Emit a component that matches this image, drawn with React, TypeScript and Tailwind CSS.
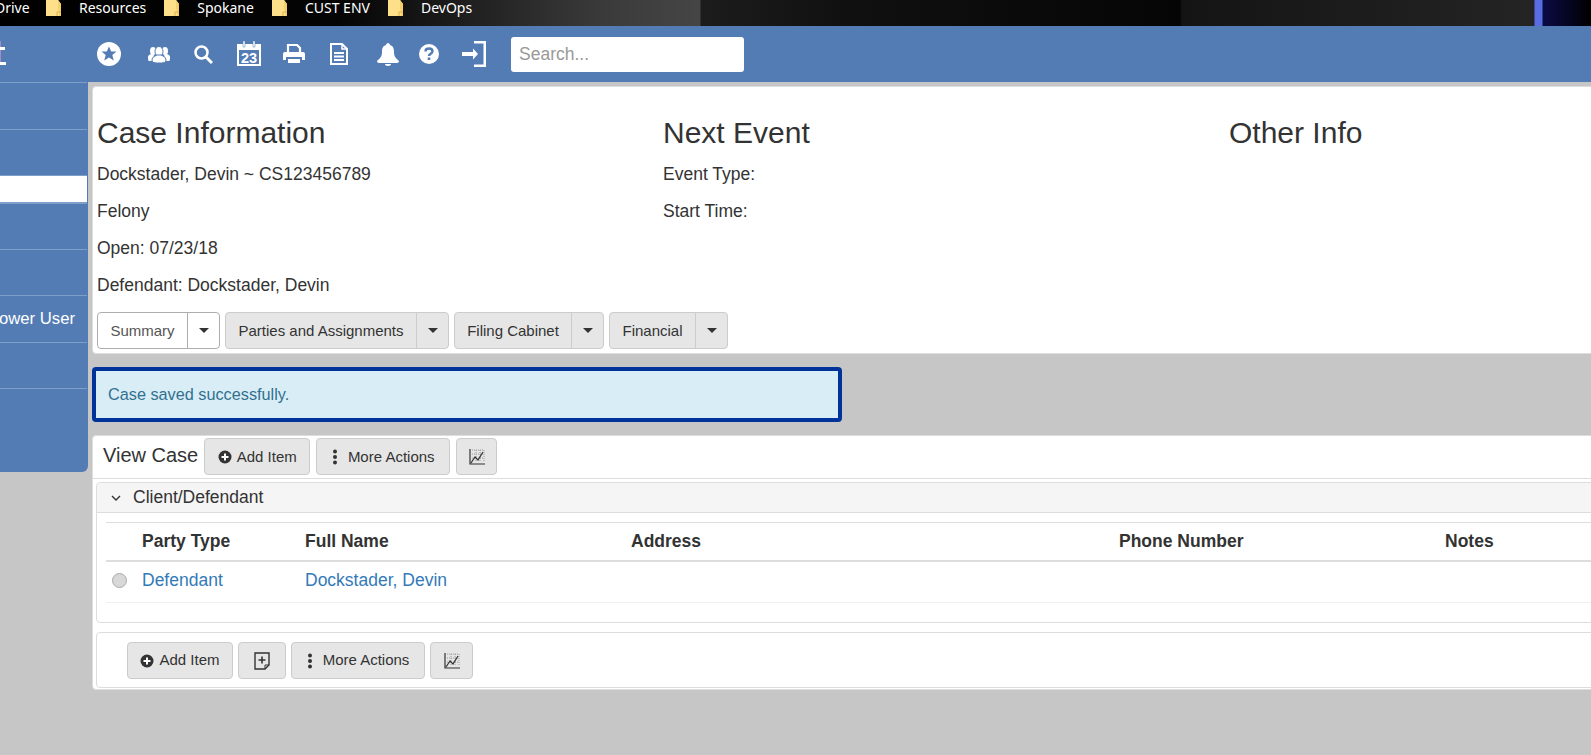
const bookmarks = ["Resources", "Spokane", "CUST ENV", "DevOps"];

const Folder = () => (
  <svg width="15" height="16" viewBox="0 0 15 16" className="shrink-0">
    <path d="M0 0H12L15 4V16H0Z" fill="#ffe08a" />
    <path d="M12 0L15 4V16H13V11L12 9Z" fill="#f5d06a" />
    <path d="M11 16V12H15" fill="none" stroke="#d9b24c" />
  </svg>
);

const StarIcon = () => (
  <svg width="24" height="24" viewBox="0 0 24 24">
    <circle cx="12" cy="12" r="12" fill="#fff" />
    <path d="M12 4.500l2.200 5h5.300l-4.200 3.500 1.500 5.500-4.800-3-4.800 3 1.500-5.500-4.200-3.500h5.300z" fill="#537cb5" />
  </svg>
);

const UsersIcon = () => (
  <svg width="22" height="17" viewBox="0 0 22 17" fill="#fff">
    <ellipse cx="5" cy="5" rx="3" ry="4" />
    <ellipse cx="17" cy="5" rx="3" ry="4" />
    <path d="M0 11c0-2 2-2.500 3-3l3 1-2 6H1c-1 0-1-2-1-4zM22 11c0-2-2-2.500-3-3l-3 1 2 6h3c1 0 1-2 1-4z" />
    <ellipse cx="11" cy="5.500" rx="4" ry="5" stroke="#537cb5" />
    <path d="M4 14c0-3 3-4 5-5h4c2 1 5 2 5 5 0 3-3 3-7 3s-7 0-7-3z" stroke="#537cb5" />
  </svg>
);

const SearchIcon = () => (
  <svg width="19" height="19" viewBox="0 0 19 19" fill="none" stroke="#fff">
    <circle cx="7.500" cy="7.500" r="6" strokeWidth="2.500" />
    <path d="M12 12l6 6" strokeWidth="3" />
  </svg>
);

const CalendarIcon = () => (
  <svg width="24" height="25" viewBox="0 0 24 25">
    <path d="M1 4h22v20H1z" fill="none" stroke="#fff" strokeWidth="2" />
    <path d="M1 4h22v5H1z" fill="#fff" />
    <path d="M6 0h2v6H6zM16 0h2v6h-2z" fill="#fff" stroke="#537cb5" strokeWidth="0.500" />
    <text x="12" y="22" textAnchor="middle" fill="#fff" fontFamily="Liberation Sans" fontWeight="700" fontSize="14.500">23</text>
  </svg>
);

const PrinterIcon = () => (
  <svg width="22" height="20" viewBox="0 0 22 20">
    <path d="M5 8V1h9l3 3v4" fill="none" stroke="#fff" strokeWidth="2.200" />
    <path d="M2 8h18a2 2 0 0 1 2 2v6h-3v-3H3v3H0v-6a2 2 0 0 1 2-2z" fill="#fff" />
    <path d="M5 15h12v4H5z" fill="#fff" />
  </svg>
);

const DocIcon = () => (
  <svg width="18" height="22" viewBox="0 0 18 22" fill="none" stroke="#fff" strokeWidth="2">
    <path d="M1 1h11l5 5v15H1z" />
    <path d="M12 1v5h5" strokeWidth="1.500" />
    <path d="M4 10h10M4 13.500h10M4 17h10" strokeWidth="2" />
  </svg>
);

const BellIcon = () => (
  <svg width="22" height="23" viewBox="0 0 22 23" fill="#fff">
    <path d="M11 0c1 0 2 1 2 2 3 1 4 3 4 7 0 5 2 6 5 9 0 1-1 2-2 2H2c-1 0-2-1-2-2 3-3 5-4 5-9 0-4 1-6 4-7 0-1 1-2 2-2z" />
    <path d="M8 21h6c0 1-1 2-3 2s-3-1-3-2z" />
  </svg>
);

const QuestionIcon = () => (
  <svg width="20" height="20" viewBox="0 0 20 20">
    <circle cx="10" cy="10" r="10" fill="#fff" />
    <path d="M6.500 7.500c0-2 1.500-3 3.500-3s3.500 1 3.500 2.800c0 2.600-3.500 2.400-3.500 4.700" fill="none" stroke="#537cb5" strokeWidth="2.400" />
    <path d="M8.700 13.500h2.600v2.500H8.700z" fill="#537cb5" />
  </svg>
);

const SignInIcon = () => (
  <svg width="24" height="26" viewBox="0 0 24 26" fill="#fff">
    <path d="M12 0h12v26H12v-2.500h9.500V2.500H12z" />
    <path d="M0 11h11V7.500l5 5.500-5 5.500V15H0z" />
  </svg>
);

const PlusCircle = () => (
  <svg width="14" height="14" viewBox="0 0 14 14">
    <circle cx="7" cy="7" r="6.500" fill="#333" />
    <path d="M3.500 7h7M7 3.500v7" stroke="#fff" strokeWidth="2" />
  </svg>
);

const Dots = () => (
  <svg width="6" height="16" viewBox="0 0 6 16" fill="#333">
    <circle cx="3" cy="2.500" r="2" />
    <circle cx="3" cy="8" r="2" />
    <circle cx="3" cy="13.500" r="2" />
  </svg>
);

const ChartIcon = () => (
  <svg width="16" height="16" viewBox="0 0 16 16" fill="none">
    <path d="M3 1h12v12M3 5h12M3 9h12M7 1v12M11 1v12" stroke="#888" strokeWidth="0.800" strokeDasharray="1 1" />
    <path d="M1 0v15h15" stroke="#333" strokeWidth="1.200" />
    <path d="M2 14l4-6 3 3 5-8" stroke="#333" strokeWidth="1.200" />
  </svg>
);

const NoteIcon = () => (
  <svg width="16" height="18" viewBox="0 0 16 18" fill="none">
    <path d="M1 1h14v12l-4 4H1z" stroke="#333" strokeWidth="1.400" />
    <path d="M4.500 8h7M8 4.500v7" stroke="#333" strokeWidth="1.600" />
    <path d="M11 17v-4h4" stroke="#333" />
  </svg>
);

const Caret = () => (
  <span className="block w-0 h-0 border-x-[5px] border-x-transparent border-t-[5px] border-t-[#333]" />
);

const SplitButton = ({ label, w, active }: { label: string; w: string; active?: boolean }) => (
  <div
    className={`flex h-[37px] rounded-[4px] border text-[15px] ${
      active ? "bg-white border-[#adadad]" : "bg-[#e6e6e6] border-[#ccc]"
    }`}
  >
    <div className={`flex items-center justify-center pt-[1px] ${w} ${active ? "text-[#555]" : "text-[#333]"}`}>{label}</div>
    <div className={`flex items-center justify-center w-[32px] border-l ${active ? "border-[#adadad]" : "border-[#ccc]"}`}>
      <Caret />
    </div>
  </div>
);

const ActionButton = ({ w, children }: { w: string; children: React.ReactNode }) => (
  <button className={`flex items-center justify-center gap-[5px] h-[37px] ${w} rounded-[4px] border border-[#ccc] bg-[#e6e6e6] text-[15px] text-[#333]`}>
    {children}
  </button>
);

const sideRows = ["h-[47px]", "h-[46px]", "", "h-[46px]", "h-[46px]", "h-[47px]", "h-[46px]", "h-[84px]"];

export default function App() {
  return (
    <div className="w-[1591px] h-[755px] overflow-hidden bg-[#c6c6c6] text-[#333] font-['Liberation_Sans',Arial,sans-serif]">
      {/* browser bookmarks strip */}
      <div className="flex items-start gap-[18px] h-[26px] pl-[1px] overflow-hidden text-white text-[14px] leading-[15px] font-['Noto_Sans',sans-serif] bg-[linear-gradient(90deg,#000_0px,#050505_340px,#3a3a3a_600px,#454545_700px,#1c1c1c_701px,#101010_850px,#050505_1180px,#141414_1182px,#242424_1534px,#5a6de0_1535px,#5a6de0_1542px,#0b0b45_1543px,#000_1591px)]">
        <span className="-ml-[6px] w-[33px]">Drive</span>
        {bookmarks.map((name) => (
          <div key={name} className="flex items-start gap-[18px]">
            <Folder />
            <span>{name}</span>
          </div>
        ))}
      </div>

      {/* app header */}
      <div className="flex items-center h-[56px] bg-[#537cb5]">
        <svg width="6" height="26" viewBox="0 0 6 26" className="shrink-0">
          <path d="M0 0h1v22H0z" fill="#a58cc8" />
          <path d="M0 6h5v3H0zM0 21h6v3H0z" fill="#fff" />
        </svg>
        <div className="ml-[91px]"><StarIcon /></div>
        <div className="ml-[27px]"><UsersIcon /></div>
        <div className="ml-[24px]"><SearchIcon /></div>
        <div className="ml-[24px] -mt-[2px]"><CalendarIcon /></div>
        <div className="ml-[22px]"><PrinterIcon /></div>
        <div className="ml-[25px]"><DocIcon /></div>
        <div className="ml-[29px]"><BellIcon /></div>
        <div className="ml-[20px]"><QuestionIcon /></div>
        <div className="ml-[23px]"><SignInIcon /></div>
        <input
          placeholder="Search..."
          className="ml-[25px] w-[233px] h-[35px] rounded-[3px] bg-white px-[8px] text-[17.5px] placeholder:text-[#999] outline-none"
        />
      </div>

      <div className="flex items-start">
        {/* sidebar */}
        <div className="w-[88px] h-[390px] shrink-0 bg-[#537cb5] rounded-br-[6px] text-white text-[16.7px]">
          {sideRows.map((h, i) =>
            i === 2 ? (
              <div key={i} className="h-[28px] w-[87px] bg-white border-y border-[#7f9fcb]" />
            ) : (
              <div key={i} className={`${h} w-[87px] border-t border-[#7f9fcb] flex items-center justify-end overflow-hidden`}>
                {i === 5 && <span className="whitespace-nowrap pr-[12px]">Power User</span>}
              </div>
            )
          )}
        </div>

        {/* main column */}
        <div className="w-[1520px] ml-[4px] shrink-0 pt-[4px]">
          <div className="h-[268px] rounded-[4px] bg-white border border-[#ddd] pl-[4px]">
            <div className="grid grid-cols-[566px_566px_1fr] pt-[29px]">
              <div>
                <h3 className="text-[30px] leading-[33px] mb-[14px]">Case Information</h3>
                <p className="text-[17.5px] leading-[23px] mb-[14px]">Dockstader, Devin ~ CS123456789</p>
                <p className="text-[17.5px] leading-[23px] mb-[14px]">Felony</p>
                <p className="text-[17.5px] leading-[23px] mb-[14px]">Open: 07/23/18</p>
                <p className="text-[17.5px] leading-[23px] mb-[14px]">Defendant: Dockstader, Devin</p>
              </div>
              <div>
                <h3 className="text-[30px] leading-[33px] mb-[14px]">Next Event</h3>
                <p className="text-[17.5px] leading-[23px] mb-[14px]">Event Type:</p>
                <p className="text-[17.5px] leading-[23px] mb-[14px]">Start Time:</p>
              </div>
              <div>
                <h3 className="text-[30px] leading-[33px]">Other Info</h3>
              </div>
            </div>
            <div className="flex gap-[5px] mt-[1px]">
              <SplitButton label="Summary" w="w-[89px]" active />
              <SplitButton label="Parties and Assignments" w="w-[190px]" />
              <SplitButton label="Filing Cabinet" w="w-[116px]" />
              <SplitButton label="Financial" w="w-[85px]" />
            </div>
          </div>

          <div className="mt-[13px] w-[750px] h-[55px] flex items-center pl-[12px] rounded-[4px] border-[4px] border-[#003399] bg-[#d9edf7] text-[#31708f] text-[16.25px]">
            Case saved successfully.
          </div>

          <div className="mt-[13px] h-[255px] rounded-[4px] bg-white border border-[#ddd] px-[3px]">
            <div className="flex gap-[6px] h-[43px] pt-[2px] -mx-[3px] pl-[10px] border-b border-[#ddd] [&>button]:pt-[1px]">
              <span className="text-[20px] leading-[34px]">View Case</span>
              <ActionButton w="w-[106px]"><PlusCircle />Add Item</ActionButton>
              <ActionButton w="w-[134px]"><span className="mr-[5px]"><Dots /></span>More Actions</ActionButton>
              <ActionButton w="w-[41px]"><ChartIcon /></ActionButton>
            </div>

            <div className="mt-[3px] h-[141px] rounded-[4px] border border-[#ddd]">
              <div className="flex items-center h-[30px] bg-[#f5f5f5] border-b border-[#ddd] rounded-t-[4px] text-[17.5px]">
                <svg width="10" height="6" viewBox="0 0 10 6" fill="none" stroke="#333" strokeWidth="1.400" className="ml-[14px] mr-[12px]">
                  <path d="M1 1l4 4 4-4" />
                </svg>
                Client/Defendant
              </div>
              <div className="ml-[9px] mt-[9px] text-[17.5px]">
                <div className="grid grid-cols-[30px_163px_326px_488px_326px_1fr] items-center h-[40px] border-t border-b-2 border-[#ddd] font-bold [&>span]:px-[6px]">
                  <span />
                  <span>Party Type</span>
                  <span>Full Name</span>
                  <span>Address</span>
                  <span>Phone Number</span>
                  <span>Notes</span>
                </div>
                <div className="grid grid-cols-[30px_163px_326px_488px_326px_1fr] items-center h-[41px] pb-[4px] border-b border-[#f0f0f0] text-[#337ab7] [&>span]:px-[6px]">
                  <div className="ml-[6px] w-[15px] h-[15px] rounded-full bg-[#d8d8d8] border border-[#aaa]" />
                  <span>Defendant</span>
                  <span>Dockstader, Devin</span>
                </div>
              </div>
            </div>

            <div className="mt-[9px] h-[56px] rounded-[4px] border border-[#ddd] flex gap-[5px] pl-[30px] pt-[9px]">
              <ActionButton w="w-[106px]"><PlusCircle />Add Item</ActionButton>
              <ActionButton w="w-[48px]"><NoteIcon /></ActionButton>
              <ActionButton w="w-[134px]"><span className="mr-[5px]"><Dots /></span>More Actions</ActionButton>
              <ActionButton w="w-[43px]"><ChartIcon /></ActionButton>
            </div>
          </div>
        </div>
      </div>
    </div>
  );
}
